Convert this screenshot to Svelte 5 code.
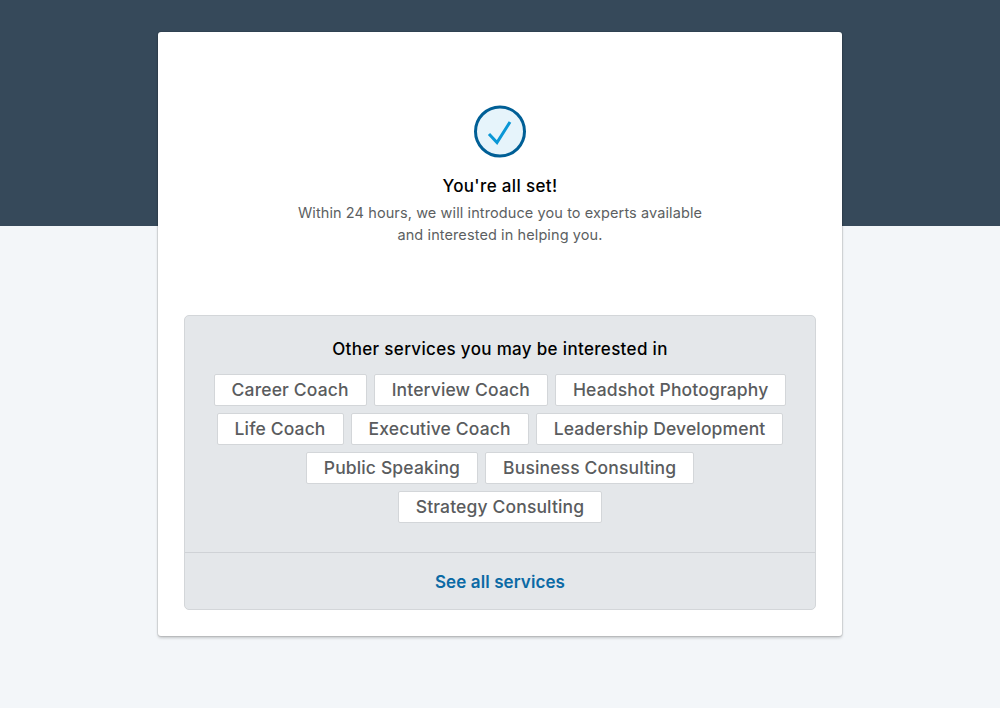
<script lang="ts">
  const services = [
    ['Career Coach', 'Interview Coach', 'Headshot Photography'],
    ['Life Coach', 'Executive Coach', 'Leadership Development'],
    ['Public Speaking', 'Business Consulting'],
    ['Strategy Consulting']
  ];
</script>

<div class="page">
  <div class="band"></div>
  <main class="card">
    <section class="confirm">
      <svg class="check" width="54" height="54" viewBox="0 0 54 54" aria-hidden="true">
        <circle cx="27" cy="26.5" r="24.5" fill="#e6f4fb" stroke="#005f96" stroke-width="3" />
        <path d="M16 29 L24 37.5 L37 17" fill="none" stroke="#0a97d6" stroke-width="3" />
      </svg>
      <h1>You're all set!</h1>
      <p>Within 24 hours, we will introduce you to experts available<br />and interested in helping you.</p>
    </section>

    <section class="services">
      <div class="services-body">
        <h2>Other services you may be interested in</h2>
        {#each services as row}
          <div class="chip-row">
            {#each row as name}
              <button class="chip" type="button">{name}</button>
            {/each}
          </div>
        {/each}
      </div>
      <div class="services-foot">
        <a href="#all">See all services</a>
      </div>
    </section>
  </main>
</div>

<style>
  :global(body) {
    background: #f3f6f9;
    font-family: Inter, "Liberation Sans", sans-serif;
  }

  .page {
    position: relative;
    height: 708px;
    padding-top: 32px;
    box-sizing: border-box;
    overflow: hidden;
  }

  .band {
    position: absolute;
    top: 0;
    left: 0;
    right: 0;
    height: 226px;
    background: #36495a;
  }

  .card {
    position: relative;
    box-sizing: border-box;
    width: 684px;
    height: 604px;
    margin: 0 auto;
    padding: 0 26px;
    background: #fff;
    border-radius: 3px;
    box-shadow: 0 0 0 1px rgba(0, 0, 0, 0.08), 0 2px 3px rgba(0, 0, 0, 0.2);
  }

  .confirm {
    height: 283px;
    padding-top: 73px;
    box-sizing: border-box;
    text-align: center;
  }

  .check {
    display: block;
    margin: 0 auto;
  }

  h1 {
    margin: 16px 0 0;
    font-size: 17px;
    line-height: 22px;
    font-weight: 500;
    letter-spacing: 0.35px;
    color: #000;
  }

  p {
    margin: 5px 0 0;
    font-size: 14.5px;
    line-height: 22px;
    letter-spacing: 0.1px;
    color: #5c5f62;
  }

  .services {
    height: 295px;
    box-sizing: border-box;
    background: #e4e7ea;
    border: 1px solid #d3d6d9;
    border-radius: 5px;
    display: flex;
    flex-direction: column;
  }

  .services-body {
    height: 237px;
    box-sizing: border-box;
    padding-top: 21px;
    border-bottom: 1px solid #cfd2d6;
  }

  h2 {
    margin: 0 0 13px;
    font-size: 17px;
    line-height: 24px;
    font-weight: 500;
    letter-spacing: 0.33px;
    text-align: center;
    color: #000;
  }

  .chip-row {
    display: flex;
    justify-content: center;
    gap: 7px;
    margin-bottom: 7px;
  }

  .chip {
    height: 32px;
    padding: 0 17px;
    background: #fff;
    border: 1px solid #d3d6d9;
    border-radius: 2px;
    font: 500 17.5px/30px Inter, "Liberation Sans", sans-serif;
    letter-spacing: 0.14px;
    color: #5a5c5e;
    white-space: nowrap;
  }

  .services-foot {
    flex: 1;
    display: flex;
    align-items: center;
    justify-content: center;
    padding-top: 1px;
  }

  a {
    font-size: 17px;
    font-weight: 600;
    letter-spacing: 0.1px;
    color: #0b6aa5;
    text-decoration: none;
  }
</style>
